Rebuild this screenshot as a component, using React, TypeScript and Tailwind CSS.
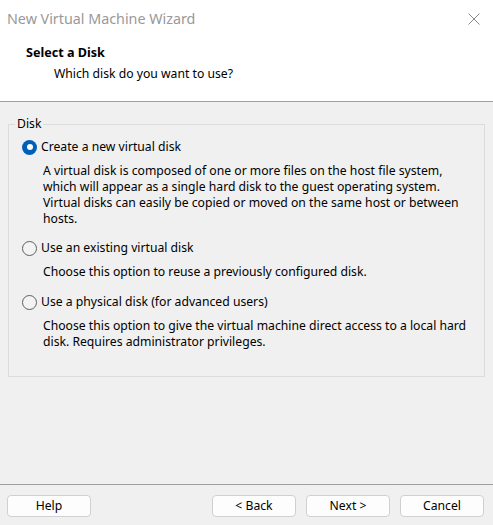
import React from "react";

const font = { fontFamily: '"Segoe UI", "Noto Sans", "Open Sans", sans-serif' };

function Radio({ checked }: { checked?: boolean }) {
  if (checked) {
    return (
      <span className="flex h-[15px] w-[15px] shrink-0 items-center justify-center rounded-full bg-[#005fb8]">
        <span className="h-[6px] w-[6px] rounded-full bg-white" />
      </span>
    );
  }
  return <span className="h-[15px] w-[15px] shrink-0 rounded-full border border-[#5f5f5f] bg-[#f3f3f3]" />;
}

function Option({
  label,
  lines,
  checked,
  className,
}: {
  label: string;
  lines: string[];
  checked?: boolean;
  className?: string;
}) {
  return (
    <div className={className}>
      <div className="flex h-[16px] items-center gap-[4px] pl-[13px]">
        <Radio checked={checked} />
        <span>{label}</span>
      </div>
      <div className="mt-[8px] pl-[34px]">
        {lines.map((l) => (
          <div key={l}>{l}</div>
        ))}
      </div>
    </div>
  );
}

function Button({ children }: { children: React.ReactNode }) {
  return (
    <button className="h-[22px] w-[84px] rounded-[4px] border border-[#d0d0d0] bg-[#fdfdfd] text-[12.2px] text-black">
      {children}
    </button>
  );
}

export default function App() {
  return (
    <div
      className="flex h-[525px] w-[493px] flex-col overflow-hidden bg-[#f0f0f0] text-[12.2px] leading-[16px] text-black"
      style={font}
    >
      <div className="h-[102px] border-b border-[#a0a0a0] bg-white">
        <div className="flex h-[37px] items-center justify-between pl-[7px] pr-[13px]">
          <span className="text-[14.3px] text-[#999999]">New Virtual Machine Wizard</span>
          <svg width="12" height="12" viewBox="0 0 12 12" className="text-[#8a8a8a]">
            <path d="M0.5 0.5 L11.5 11.5 M11.5 0.5 L0.5 11.5" stroke="currentColor" strokeWidth="1" />
          </svg>
        </div>
        <div className="mt-[8px] pl-[26px] text-[12.6px] font-bold">Select a Disk</div>
        <div className="mt-[5px] pl-[54px]">Which disk do you want to use?</div>
      </div>

      <div className="flex-1 px-[8px] pt-[22px]">
        <div className="relative h-[253px] border border-[#dcdcdc] pt-[14px]">
          <span className="absolute -top-[9px] left-[6px] bg-[#f0f0f0] px-[2px]">Disk</span>
          <Option
            checked
            label="Create a new virtual disk"
            lines={[
              "A virtual disk is composed of one or more files on the host file system,",
              "which will appear as a single hard disk to the guest operating system.",
              "Virtual disks can easily be copied or moved on the same host or between",
              "hosts.",
            ]}
          />
          <Option
            className="mt-[13px]"
            label="Use an existing virtual disk"
            lines={["Choose this option to reuse a previously configured disk."]}
          />
          <Option
            className="mt-[14px]"
            label="Use a physical disk (for advanced users)"
            lines={[
              "Choose this option to give the virtual machine direct access to a local hard",
              "disk. Requires administrator privileges.",
            ]}
          />
        </div>
      </div>

      <div className="flex h-[41px] items-start border-t border-[#a0a0a0] pl-[7px] pr-[9px] pt-[10px]">
        <Button>Help</Button>
        <div className="ml-auto flex gap-[10px]">
          <Button>&lt; Back</Button>
          <Button>Next &gt;</Button>
          <Button>Cancel</Button>
        </div>
      </div>
    </div>
  );
}
